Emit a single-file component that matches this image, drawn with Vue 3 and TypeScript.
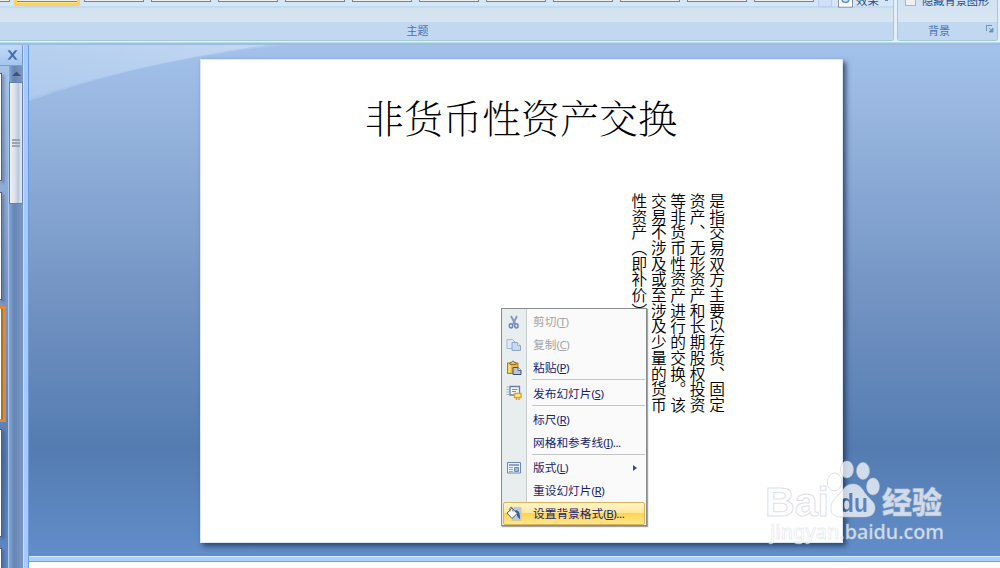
<script setup lang="ts">
interface MenuItem {
  label: string
  key: string
  tail?: string
  icon?: string
  disabled?: boolean
  submenu?: boolean
  active?: boolean
  divided?: boolean
}

const themes: number[] = Array.from({ length: 13 }, (_, i) => i)

const items: MenuItem[] = [
  { label: '剪切', key: 'T', icon: 'cut', disabled: true },
  { label: '复制', key: 'C', icon: 'copy', disabled: true },
  { label: '粘贴', key: 'P', icon: 'paste' },
  { label: '发布幻灯片', key: 'S', icon: 'publish', divided: true },
  { label: '标尺', key: 'R', divided: true },
  { label: '网格和参考线', key: 'I', tail: '...' },
  { label: '版式', key: 'L', icon: 'layout', submenu: true, divided: true },
  { label: '重设幻灯片', key: 'R' },
  { label: '设置背景格式', key: 'B', tail: '...', icon: 'fill', active: true },
]
const columns: string[] = [
  '是指交易双方主要以存货、固定',
  '资产、无形资产和长期股权投资',
  '等非货币性资产进行的交换。该',
  '交易不涉及或至涉及少量的货币',
  '性资产（即补价）',
]
</script>

<template>
  <div class="app">
    <header class="ribbon">
      <section class="group themes">
        <div class="controls">
          <div class="gallery">
            <i v-for="n in themes" :key="n" class="thumb" :class="{ selected: n === 1 }"></i>
          </div>
          <i class="scroll-btn"></i>
          <svg class="effect" width="15" height="8" viewBox="0 0 15 8">
            <path d="M.5 0v7.2h14V0" fill="#fff" stroke="#7f91ae" />
            <path d="M4 0a3.7 3.7 0 0 0 7 0" fill="#d9e9fb" stroke="#5c8fd0" stroke-width="1.6" />
          </svg>
          <span class="ctl">效果</span>
          <i class="dot"></i>
        </div>
        <div class="caption"><span>主题</span></div>
      </section>
      <section class="group background">
        <div class="controls">
          <i class="check"></i>
          <span class="ctl hide">隐藏背景图形</span>
        </div>
        <div class="caption">
          <span>背景</span>
          <svg class="launcher" width="8" height="8" viewBox="0 0 8 8">
            <path d="M.5 6V.5H6" fill="none" stroke="#7190b5" />
            <path d="M3 3l3 3M7 3v4H3z" fill="#7190b5" stroke="#7190b5" stroke-width=".8" />
          </svg>
        </div>
      </section>
    </header>

    <main class="body">
      <aside class="panel">
        <div class="close">
          <svg width="11" height="10" viewBox="0 0 11 10">
            <path d="M1 .6h2l7 8.8H8zM8 .6h2L3 9.400H1z" fill="#416ea9" stroke="#416ea9" stroke-width=".5" />
          </svg>
        </div>
        <div class="panel-body">
          <div class="slides">
            <i class="mini first"></i>
            <i class="mini"></i>
            <i class="mini current"></i>
            <i class="mini"></i>
            <i class="mini last"></i>
          </div>
          <div class="track">
            <svg width="13" height="15" viewBox="0 0 13 15"><path d="M2 9.500 6.500 5 11 9.500z" fill="#44527a" /></svg>
            <div class="handle"><i></i><i></i><i></i></div>
          </div>
        </div>
      </aside>
      <div class="splitter"></div>

      <div class="stage">
        <div class="canvas">
          <svg class="swoosh" width="260" height="58" viewBox="0 0 260 58">
            <defs>
              <linearGradient id="sw" x1="0" y1="1" x2="1" y2="0">
                <stop offset="0" stop-color="#adc9ec" />
                <stop offset="1" stop-color="#c2d7f3" />
              </linearGradient>
            </defs>
            <path d="M0 0H256Q120 14 0 56z" fill="#b4cdf0" opacity=".6" />
            <path d="M0 0H238Q110 18 0 53z" fill="url(#sw)" />
          </svg>
          <article class="slide">
            <h1>非货币性资产交换</h1>
            <div class="text">
              <p v-for="c in columns" :key="c">{{ c }}</p>
            </div>
          </article>
        </div>
        <div class="gap"></div>
        <div class="notes"></div>
      </div>
    </main>

    <nav class="menu">
      <template v-for="item in items" :key="item.label">
        <div v-if="item.divided" class="divider"></div>
        <div class="item" :class="{ disabled: item.disabled, active: item.active }">
          <span class="icon">
            <svg v-if="item.icon === 'cut'" width="16" height="16" viewBox="0 0 16 16" fill="none">
              <path d="M5 2l4.2 8M11 2L7 10" stroke="#8295bb" stroke-width="1.8" />
              <ellipse cx="5" cy="11.8" rx="1.7" ry="2.1" stroke="#6c84b3" stroke-width="1.5" />
              <ellipse cx="10.4" cy="11.8" rx="1.7" ry="2.1" stroke="#6c84b3" stroke-width="1.5" />
            </svg>
            <svg v-else-if="item.icon === 'copy'" width="16" height="16" viewBox="0 0 16 16">
              <path d="M1 2.500h5.500l2.500 2.500v6.500h-8z" fill="#dfe8f6" stroke="#a7b7d6" />
              <path d="M6 5.500h5.500l3 3v5h-8.500z" fill="#cbd9ef" stroke="#8fa4cc" />
              <path d="M11.500 5.500v3h3" fill="#e6edf8" stroke="#9eb1d5" />
            </svg>
            <svg v-else-if="item.icon === 'paste'" width="16" height="16" viewBox="0 0 16 16">
              <path d="M1.500 3h10.500v10.500h-10.500z" fill="#f3b62f" stroke="#b17b1b" />
              <path d="M2.500 4h2v8.500h-2z" fill="#ffe388" />
              <path d="M4 4.500V2.500h1.500L6.500 1h1L8.500 2.500H10v2z" fill="#d8c391" stroke="#735a31" stroke-width=".8" />
              <path d="M7 7.500h5l3 3V14.500H7z" fill="#b9c7dd" stroke="#3c4f78" />
              <path d="M12 7.500v3h3" fill="#eef3fa" stroke="#53688f" />
            </svg>
            <svg v-else-if="item.icon === 'publish'" width="16" height="16" viewBox="0 0 16 16">
              <path d="M4 1.500h9.500v8.500h-9.500z" fill="#f3f7fc" stroke="#667fae" stroke-width="1.300" />
              <path d="M6 4.500h5.500M6 6.500h4" stroke="#7790bb" />
              <path d="M.5 2h2.500M.5 4.500h2.500M.5 7h2.500M.5 9.500h2.500" stroke="#a6b6ce" />
              <path d="M8.500 8.500h6.500v4H8.500z" fill="#ffeaa0" stroke="#dda329" stroke-width="1.4" />
              <path d="M10.500 13v2M13 13v2" stroke="#d89b27" stroke-width="1.400" />
            </svg>
            <svg v-else-if="item.icon === 'layout'" width="16" height="16" viewBox="0 0 16 16">
              <path d="M1.500 2.500h13v10.500h-13z" fill="#edf3fb" stroke="#6a86b5" />
              <path d="M3 5h10" stroke="#8ba5cc" stroke-width="2" />
              <path d="M3 7.500h4M3 9.500h4M3 11.500h4" stroke="#8fa8ce" />
              <path d="M8.500 7.500h4v4h-4z" fill="#9eb8dc" stroke="#6f8dbd" />
            </svg>
            <svg v-else-if="item.icon === 'fill'" width="16" height="16" viewBox="0 0 16 16">
              <path d="M8 1.500h7v13H6z" fill="#b8cbe4" stroke="#d6c991" />
              <path d="M1 7L6 2.200 11.200 7.500 6 12.500z" fill="#f7fafc" stroke="#50647f" />
              <path d="M4 5.500C2.800 0 7.200-.5 7 5.500" fill="none" stroke="#596a83" />
              <path d="M9 5c3-1 4.500 1 4.500 7.500L11.500 10V7.500" fill="#3368a5" stroke="#244b7e" stroke-width=".8" />
            </svg>
          </span>
          <span class="label">{{ item.label }}<b>(<u>{{ item.key }}</u>){{ item.tail }}</b></span>
          <i v-if="item.submenu" class="arrow"></i>
        </div>
      </template>
    </nav>

    <svg class="mark" width="210" height="100" viewBox="0 0 210 100">
      <mask id="paw" maskUnits="userSpaceOnUse" x="0" y="0" width="210" height="100">
        <rect width="210" height="100" fill="#fff" />
        <text class="du" x="95" y="61" textLength="28" lengthAdjust="spacingAndGlyphs">du</text>
      </mask>
      <g fill="#fff" fill-opacity=".73" stroke="#bcc3cc" stroke-opacity=".5" stroke-width="1">
        <ellipse cx="89.500" cy="31" rx="7.200" ry="9" />
        <ellipse cx="102" cy="18.500" rx="6.500" ry="8.500" />
        <ellipse cx="118" cy="20" rx="6.500" ry="8.500" />
        <ellipse cx="128" cy="35.500" rx="6.500" ry="8.500" />
        <path mask="url(#paw)" d="M108 33c6 0 9 4 12 9 4 6 11 9 10 16-1 8-8 8-13 8H100c-7 0-14 0-14-8-1-7 5-11 10-17 4-5 6-8 12-8z" />
        <text class="bai" x="20" y="65" textLength="64" lengthAdjust="spacingAndGlyphs">Bai</text>
        <text class="cn" x="137" y="62" textLength="60" lengthAdjust="spacingAndGlyphs">经验</text>
        <text class="url" x="25" y="88" textLength="174" lengthAdjust="spacingAndGlyphs">jingyan.baidu.com</text>
      </g>
    </svg>
  </div>
</template>

<style>
body { overflow: hidden; }
</style>

<style scoped>
* { box-sizing: border-box; }
.app {
  position: relative; display: flex; flex-direction: column; width: 1000px; height: 568px; overflow: hidden;
  font-family: "Noto Sans CJK SC", "Noto Sans", sans-serif;
}
.ribbon {
  flex: none; display: flex; gap: 3px; height: 45px; padding: 0 2px 4px 0;
  background: linear-gradient(#e1effa 0 41px, #e0f8fc 41px 42px, #b3e0e5 42px 43px, #a5bdd8 43px 44px, #a2bae0 44px);
}
.group { display: flex; flex-direction: column; height: 41px; border: 1px solid #a5c5e0; border-top: 0; border-radius: 0 0 3px 3px; overflow: hidden; }
.themes { width: 895px; border-left: 0; border-bottom-left-radius: 0; }
.background { width: 101px; }
.controls { height: 22px; display: flex; align-items: flex-start; background: linear-gradient(#d3e2f0, #d8e6f3); }
.themes .controls { background: linear-gradient(#d5e6f9 0 6px, #c4daf1 6px 8px, #d3e2ef 8px, #d7e5f2); }
.gallery { display: flex; gap: 7px; width: 818px; height: 6px; }
.thumb { flex: none; width: 60px; height: 2px; background: #eef0ed; border: 1px solid #7b8184; border-top: 0; }
.thumb:first-child { width: 9.500px; border-left: 0; }
.thumb.selected { width: 66px; height: 6px; margin: 0 -3px 0 -2.500px; border: 3px solid #ffd158; border-top: 0; border-radius: 0 0 2px 2px; background: linear-gradient(#eef0ed 0 1px, #858174 1px 2px, #ffe58a 2px); }
.scroll-btn { flex: none; width: 14px; height: 7px; background: #cfe0f8; border: 1px solid #b9cfed; border-top: 0; }
.effect { flex: none; margin-left: 6px; }
.ctl { flex: none; height: 12px; margin: -7px 0 0 3px; color: #244b91; font-size: 11.400px; line-height: 14px; white-space: nowrap; }
.dot { width: 3px; height: 1px; margin-left: 6px; background: #6684b3; }
.check { flex: none; width: 11px; height: 6px; margin-left: 7px; border: 1px solid #a6b4c8; border-top: 0; background: #eef1f3; }
.hide { margin-left: 6px; font-size: 11.200px; }
.caption { position: relative; height: 18px; display: flex; justify-content: center; background: #c2d8f0; color: #4572b8; font-size: 11px; line-height: 16px; }
.themes .caption { padding-right: 58px; }
.background .caption { padding-right: 17px; }
.launcher { position: absolute; right: 3px; top: 3px; }
.body { flex: 1; display: flex; min-height: 0; }
.panel { width: 23px; display: flex; flex-direction: column; overflow: hidden; }
.close { flex: none; height: 21px; display: flex; align-items: center; justify-content: flex-end; padding-right: 4px; border-right: 1px solid #6c9ad7; border-bottom: 1px solid #739fd9; background: linear-gradient(#c1d9f8, #a6c5ee); }
.panel-body { flex: 1; min-height: 0; display: flex; background: linear-gradient(#a6c2e8, #7896c5 48%, #547cb1 78%, #6089c4); }
.slides { width: 8px; display: flex; flex-direction: column; align-items: flex-start; }
.mini { flex: none; width: 2px; height: 108px; margin-bottom: 11px; background: #fff; border: solid #555e6b; border-width: 1px 1px 1px 0; box-shadow: 2px 2px 3px #263c6688; }
.mini.first { margin-top: 7px; }
.mini.current { width: 5.500px; height: 116px; margin: -5px 0 7px; border: solid #de8642; border-width: 3px 3px 3px 0; background: linear-gradient(90deg, #fff 1px, #a67521 1px); box-shadow: none; }
.track { width: 15px; display: flex; flex-direction: column; align-items: flex-end; border-left: 1px solid #a8c5ec; background: linear-gradient(90deg, #84a8d8, #6685b3 35%, #7b99c5); }
.track svg { flex: none; height: 16px; }
.handle { flex: none; width: 14px; height: 122px; display: flex; flex-direction: column; gap: 1px; align-items: center; justify-content: center; border: 1px solid #697da5; background: linear-gradient(90deg, #eef0f5, #dbe1ec 40%, #b8c8da 70%, #e7edf5); }
.handle i { width: 8px; height: 2px; background: #9ba4b1; }
.splitter { width: 6px; border-right: 1px solid #6b9bdc; border-left: 1px solid #c4e0ff; background: #a5caff; }
.stage { flex: 1; min-width: 0; display: flex; flex-direction: column; }
.canvas { position: relative; height: 511px; padding: 14px 0 0 171px; background: linear-gradient(#a3c2eb, #98b6df 13%, #7192c2 51%, #547cb1 79%, #618dc9); }
.swoosh { position: absolute; left: 0; top: 0; }
.slide { position: relative; width: 643px; height: 484px; background: #fff; border: 1px solid #dce7f7; box-shadow: 3px 3px 5px #203457cc; }
h1 { margin: 31px 0 0; padding-left: 164px; font-weight: 200; font-size: 39px; line-height: 50px; color: #000; font-family: "Noto Serif CJK SC", "Noto Sans CJK SC", sans-serif; white-space: nowrap; }
.text { display: flex; flex-direction: row-reverse; width: 97px; height: 222px; margin: 52px 0 0 428.500px; }
.text p { margin: 0; width: 19.400px; writing-mode: vertical-rl; font-size: 15.700px; line-height: 19.400px; font-weight: 350; white-space: nowrap; color: #000; }
.gap { height: 6px; border-top: 1px solid #d4eaff; border-bottom: 1px solid #73a1dd; background: #abcfff; }
.notes { flex: 1; background: #fff; }
.menu {
  position: absolute; left: 501px; top: 308px; width: 146px; height: 218px; padding: 1.200px 1px 0; border: 1px solid #888c8e;
  background: linear-gradient(90deg, #e8eeee 24px, #c7cccc 24px 25px, #fafafa 25px); box-shadow: 1px 1px 1px #777a;
}
.item { display: flex; align-items: center; height: 23px; color: #17246e; border: 1px solid transparent; }
.item.disabled { color: #a4a4a4; }
.item.active { border-color: #d9b458; border-radius: 2px; background: linear-gradient(#fff5ce, #ffe798 48%, #ffd34f 50%, #ffe78e); }
.icon { flex: none; width: 22px; height: 20px; padding-left: 2px; display: flex; align-items: center; }
.label { flex: none; margin-left: 7px; font-size: 11.700px; line-height: 20px; white-space: nowrap; }
.label b { font-weight: 400; font-family: "Noto Sans", sans-serif; font-size: 11.500px; letter-spacing: -.4px; }
.label u { text-decoration-thickness: 1px; text-underline-offset: 1px; }
.divider { height: 2.670px; margin-left: 29px; border-top: 1px solid #c4c6c6; }
.arrow { margin-left: auto; margin-right: 7px; border: 3px solid transparent; border-left: 4px solid #3c4b83; border-right: 0; }
.mark { position: absolute; left: 745px; top: 451px; }
.bai { font: 700 40px "Liberation Sans", sans-serif; }
.cn { font: 900 30px "Noto Sans CJK SC", sans-serif; }
.url { font: 500 19.500px "Noto Sans", sans-serif; stroke-opacity: .3; }
.du { font: 700 25px "Liberation Sans", sans-serif; fill: #000; }
</style>
